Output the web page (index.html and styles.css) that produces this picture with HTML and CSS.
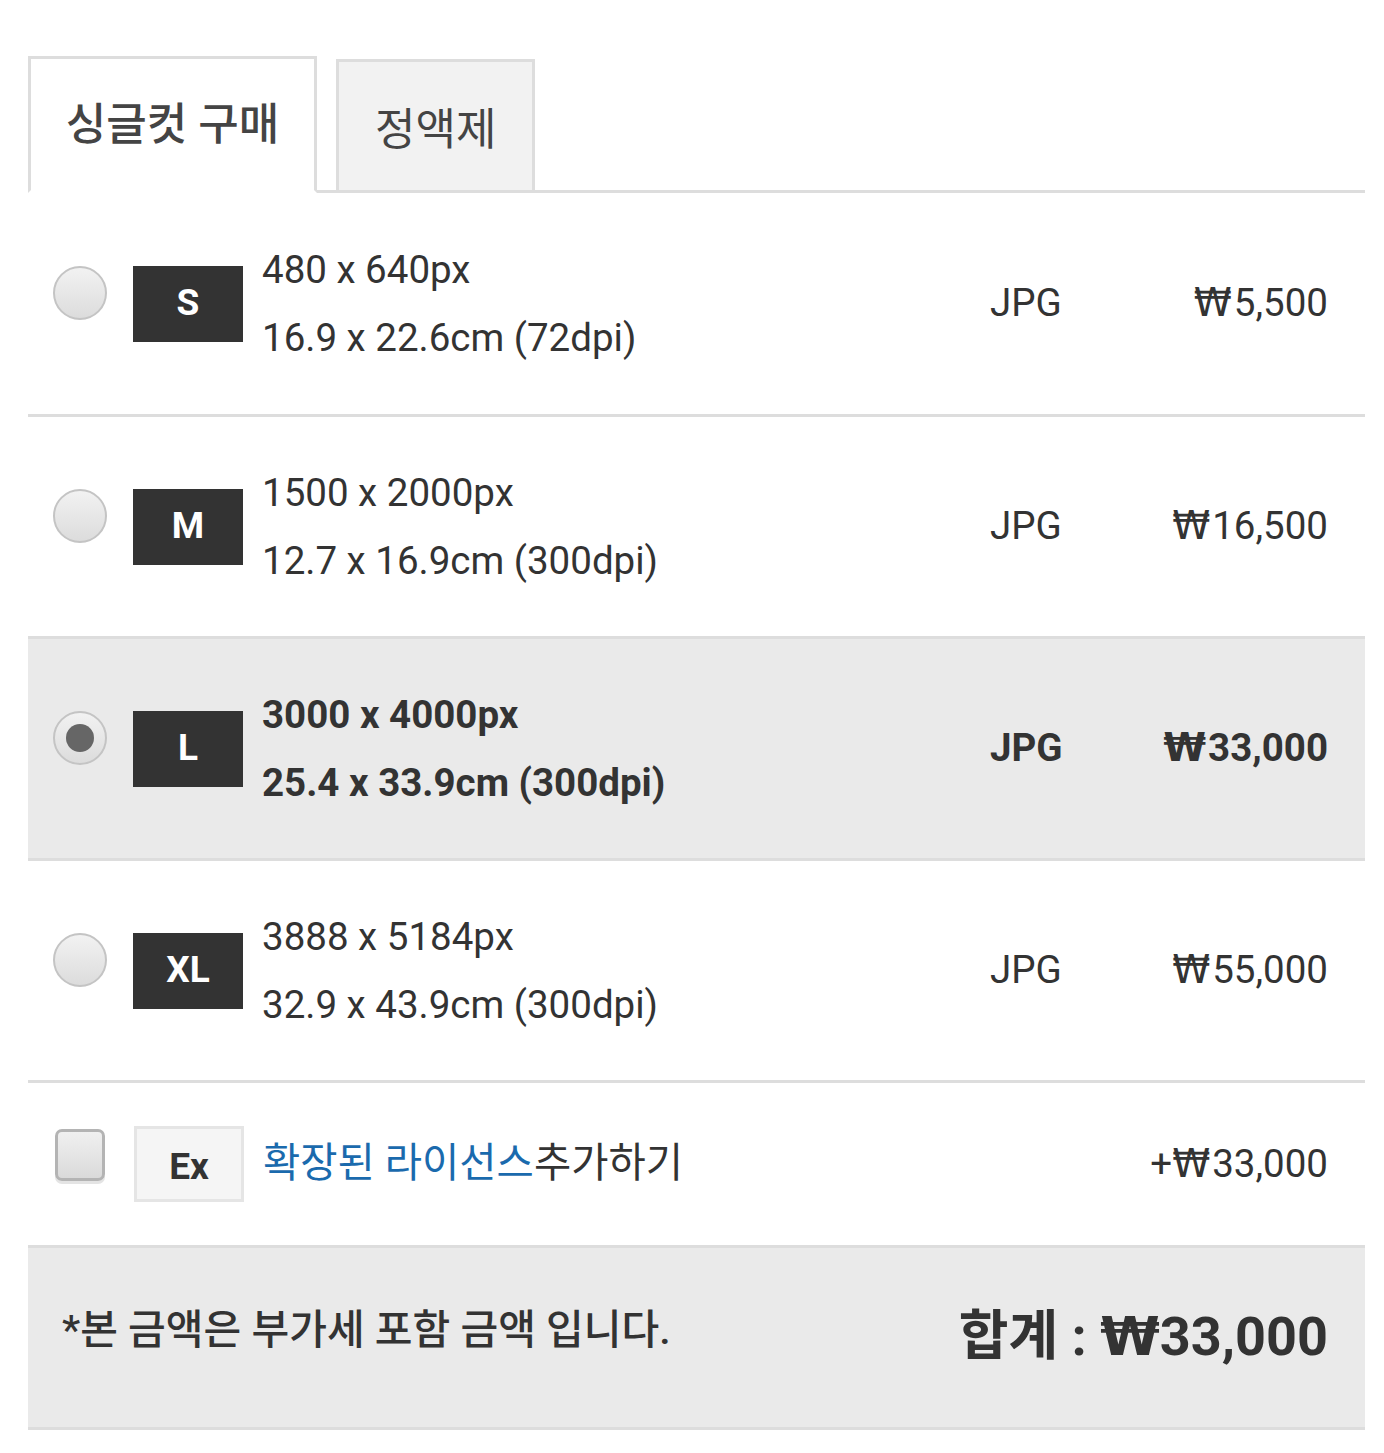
FILE: index.html
```html
<!DOCTYPE html>
<html lang="ko">
<head>
    <meta charset="UTF-8">
    <meta name="viewport" content="width=device-width, initial-scale=1.0">
    <title>구매 옵션</title>
    <link rel="stylesheet" href="styles.css">
</head>
<body>
    <div class="buy">
        <ul class="tabs">
            <li class="tab active">싱글컷 구매</li>
            <li class="tab">정액제</li>
        </ul>

        <div class="size-list">
            <label class="size-row">
                <input type="radio" name="size" class="radio">
                <span class="badge">S</span>
                <span class="size-info">
                    <span>480 x 640px</span>
                    <span>16.9 x 22.6cm (72dpi)</span>
                </span>
                <span class="format">JPG</span>
                <span class="price"><span class="won">₩</span>5,500</span>
            </label>
            <label class="size-row">
                <input type="radio" name="size" class="radio">
                <span class="badge">M</span>
                <span class="size-info">
                    <span>1500 x 2000px</span>
                    <span>12.7 x 16.9cm (300dpi)</span>
                </span>
                <span class="format">JPG</span>
                <span class="price"><span class="won">₩</span>16,500</span>
            </label>
            <label class="size-row selected">
                <input type="radio" name="size" class="radio" checked>
                <span class="badge">L</span>
                <span class="size-info">
                    <span>3000 x 4000px</span>
                    <span>25.4 x 33.9cm (300dpi)</span>
                </span>
                <span class="format">JPG</span>
                <span class="price"><span class="won">₩</span>33,000</span>
            </label>
            <label class="size-row">
                <input type="radio" name="size" class="radio">
                <span class="badge">XL</span>
                <span class="size-info">
                    <span>3888 x 5184px</span>
                    <span>32.9 x 43.9cm (300dpi)</span>
                </span>
                <span class="format">JPG</span>
                <span class="price"><span class="won">₩</span>55,000</span>
            </label>
            <label class="size-row extra">
                <input type="checkbox" class="check">
                <span class="badge light">Ex</span>
                <span class="extra-text"><span class="link">확장된 라이선스</span>추가하기</span>
                <span class="price">+<span class="won">₩</span>33,000</span>
            </label>
        </div>

        <div class="summary">
            <span class="note">*본 금액은 부가세 포함 금액 입니다.</span>
            <span class="total">합계 : <span class="won">₩</span>33,000</span>
        </div>
    </div>
</body>
</html>
```

FILE: styles.css
```css
* {
    padding: 0;
    margin: 0;
    box-sizing: border-box;
}

body {
    font-family: Roboto, "Noto Sans CJK KR", sans-serif;
    color: #333;
    background: #fff;
}

.buy {
    margin: 0 19px 0 28px;
    padding-top: 56px;
}

/* 탭 */
.tabs {
    list-style: none;
    display: flex;
    align-items: flex-end;
    border-bottom: 3px solid #ddd;
}

.tab {
    height: 134px;
    margin-bottom: -3px;
    margin-left: 19px;
    padding: 0 36px;
    display: flex;
    align-items: center;
    justify-content: center;
    font-size: 44px;
    color: #444;
    background: #f2f2f2;
    border: 3px solid #ddd;
}

.tab.active {
    height: 137px;
    margin-left: 0;
    width: 289px;
    padding: 0 0 8px;
    font-weight: 500;
    background: #fff;
    border-bottom-color: #fff;
}

/* 사이즈 목록 */
.size-row {
    display: flex;
    align-items: center;
    height: 222px;
    padding: 0 37px 0 25px;
    border-bottom: 3px solid #ddd;
    font-size: 38.5px;
    line-height: 1.2;
}

.size-row:first-child {
    height: 224px;
}

.size-row.selected {
    background: #eaeaea;
    font-weight: 700;
}

.radio {
    appearance: none;
    -webkit-appearance: none;
    flex: none;
    width: 54px;
    height: 54px;
    margin-bottom: 22px;
    border-radius: 50%;
    border: 2px solid #c4c4c4;
    background: linear-gradient(#f2f2f2, #dcdcdc);
    display: flex;
    align-items: center;
    justify-content: center;
}

.radio:checked::after {
    content: "";
    width: 28px;
    height: 28px;
    border-radius: 50%;
    background: #666;
}

.badge {
    flex: none;
    width: 110px;
    height: 76px;
    margin: 0 19px 0 26px;
    display: flex;
    align-items: center;
    justify-content: center;
    background: #333;
    color: #fff;
    font-size: 37px;
    font-weight: 700;
}

.badge.light {
    background: #f5f5f5;
    color: #333;
    border: 3px solid #e5e5e5;
    padding-top: 6px;
}

.size-info {
    flex: 1;
    display: flex;
    flex-direction: column;
    line-height: 68px;
}

.format {
    width: 138px;
}

.price {
    width: 200px;
    text-align: right;
    white-space: nowrap;
}

.won {
    font-family: "DejaVu Sans", sans-serif;
    font-weight: 400;
    margin-right: 2px;
}

.selected .won,
.total .won {
    font-weight: 700;
}

.size-row.extra {
    height: 165px;
}

.check {
    appearance: none;
    -webkit-appearance: none;
    flex: none;
    width: 50px;
    height: 52px;
    margin: 0 3px 18px 2px;
    border-radius: 7px;
    border: 3px solid #b4b4b4;
    background: linear-gradient(#f0f0f0, #dadada);
    box-shadow: 0 3px 0 #e4e4e4;
}

.extra-text {
    flex: 1;
    font-size: 40.5px;
    padding-bottom: 2px;
}

.extra-text .link {
    color: #1a6aad;
}

/* 합계 */
.summary {
    display: flex;
    align-items: center;
    justify-content: space-between;
    height: 182px;
    padding: 0 37px 0 34px;
    background: #eaeaea;
    border-bottom: 3px solid #ddd;
}

.note {
    font-size: 41px;
    font-weight: 500;
    margin-bottom: 24px;
}

.total {
    font-size: 54px;
    font-weight: 700;
    line-height: 1.2;
}

.total .won {
    margin-right: 0;
}
```
